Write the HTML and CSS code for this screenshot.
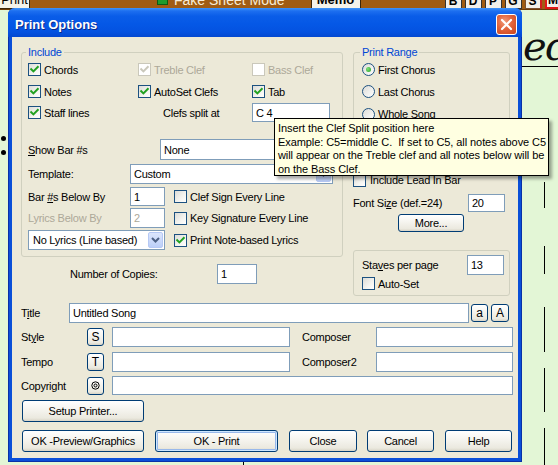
FILE: index.html
```html
<!DOCTYPE html>
<html>
<head>
<meta charset="utf-8">
<title>Print Options</title>
<link rel="stylesheet" href="styles.css">
</head>
<body>
<div class="app">
  <div class="toolbar">
    <span class="tb-btn tb-print">Print</span>
    <span class="tb-fake"><span class="tb-cb"></span>Fake Sheet Mode</span>
    <span class="tb-btn tb-memo">Memo</span>
    <span class="tb-letters">
      <span class="tb-l">B</span><span class="tb-l">D</span><span class="tb-l">P</span><span class="tb-l">G</span><span class="tb-l tb-s">S</span><span class="tb-l tb-m">M</span>
    </span>
  </div>
  <div class="tb-line"></div>
  <span class="sheet-title">ed</span>
  <span class="sheet-rule"></span>
  <span class="dot d1"></span><span class="dot d2"></span>
  <span class="bar b1"></span><span class="bar b2"></span><span class="bar b3"></span><span class="bar b4"></span><span class="bar b5"></span>
  <span class="bar b6"></span>
</div>

<div class="dialog">
  <div class="titlebar">
    <span class="title-text">Print Options</span>
    <span class="close-btn"><svg width="13" height="13" viewBox="0 0 13 13"><path d="M2 2 L11 11 M11 2 L2 11" stroke="#fff" stroke-width="2.2" stroke-linecap="round"/></svg></span>
  </div>
  <div class="dbody">
    <div class="top">
      <div class="col-left">
        <fieldset class="group inc">
          <legend>Include</legend>
          <div class="cbgrid">
            <span class="ck"><span class="cb"><svg viewBox="0 0 11 11"><path d="M2.2 5.2 L4.4 7.4 L8.8 3" class="chk"/></svg></span>Chords</span>
            <span class="ck dis"><span class="cb dis"><svg viewBox="0 0 11 11"><path d="M2.2 5.2 L4.4 7.4 L8.8 3" class="chk"/></svg></span>Treble Clef</span>
            <span class="ck dis"><span class="cb dis"></span>Bass Clef</span>
            <span class="ck"><span class="cb"><svg viewBox="0 0 11 11"><path d="M2.2 5.2 L4.4 7.4 L8.8 3" class="chk"/></svg></span>Notes</span>
            <span class="ck"><span class="cb"><svg viewBox="0 0 11 11"><path d="M2.2 5.2 L4.4 7.4 L8.8 3" class="chk"/></svg></span>AutoSet Clefs</span>
            <span class="ck"><span class="cb"><svg viewBox="0 0 11 11"><path d="M2.2 5.2 L4.4 7.4 L8.8 3" class="chk"/></svg></span>Tab</span>
            <span class="ck"><span class="cb"><svg viewBox="0 0 11 11"><path d="M2.2 5.2 L4.4 7.4 L8.8 3" class="chk"/></svg></span>Staff lines</span>
            <span class="lbl split">Clefs split at</span>
            <span class="inp c4">C 4</span>
          </div>
          <div class="row r-show">
            <span class="lbl w132"><u>S</u>how Bar #s</span>
            <span class="sel w173"><span class="sel-text">None</span><span class="arrow"><svg width="9" height="6" viewBox="0 0 9 6"><path d="M1 1 L4.5 4.5 L8 1" stroke="#4d6185" stroke-width="2" fill="none"/></svg></span></span>
          </div>
          <div class="row r-tpl">
            <span class="lbl w102">Template:</span>
            <span class="sel w203"><span class="sel-text">Custom</span><span class="arrow"><svg width="9" height="6" viewBox="0 0 9 6"><path d="M1 1 L4.5 4.5 L8 1" stroke="#4d6185" stroke-width="2" fill="none"/></svg></span></span>
          </div>
          <div class="row r-bar">
            <span class="lbl w102">Bar <u>#</u>s Below By</span>
            <span class="inp w35">1</span>
            <span class="ck ml9"><span class="cb"></span>Clef Sign Every Line</span>
          </div>
          <div class="row r-lyr">
            <span class="lbl w102 gray">Lyrics Below By</span>
            <span class="inp w35 gray">2</span>
            <span class="ck ml9"><span class="cb"></span>Key Signature Every Line</span>
          </div>
          <div class="row r-nol">
            <span class="sel w137"><span class="sel-text">No Lyrics (Line based)</span><span class="arrow"><svg width="9" height="6" viewBox="0 0 9 6"><path d="M1 1 L4.5 4.5 L8 1" stroke="#4d6185" stroke-width="2" fill="none"/></svg></span></span>
            <span class="ck ml9"><span class="cb"><svg viewBox="0 0 11 11"><path d="M2.2 5.2 L4.4 7.4 L8.8 3" class="chk"/></svg></span>Print Note-based Lyrics</span>
          </div>
        </fieldset>
        <div class="row r-copies">
          <span class="lbl w147">Number of Copies:</span>
          <span class="inp w40">1</span>
        </div>
      </div>
      <div class="col-right">
        <fieldset class="group rng">
          <legend>Print Range</legend>
          <div class="rgrid">
            <span class="ck"><span class="rb on"></span>First Chorus</span>
            <span class="ck"><span class="rb"></span>Last Chorus</span>
            <span class="ck"><span class="rb"></span>Whole Song</span>
          </div>
        </fieldset>
        <div class="row r-lead">
          <span class="ck"><span class="cb mr4"></span>Include Lead In Bar</span>
        </div>
        <div class="row r-font">
          <span class="lbl w115">Font Si<u>z</u>e (def.=24)</span>
          <span class="inp w37">20</span>
        </div>
        <div class="row r-more">
          <span class="btn more">More...</span>
        </div>
        <fieldset class="group staves">
          <div class="row r-stv">
            <span class="lbl w105">Sta<u>v</u>es per page</span>
            <span class="inp w37">13</span>
          </div>
          <div class="row r-auto">
            <span class="ck"><span class="cb"></span>Auto-Set</span>
          </div>
        </fieldset>
      </div>
    </div>

    <div class="form">
      <div class="row f-title">
        <span class="lbl w48">T<u>i</u>tle</span>
        <span class="inp w400">Untitled Song</span>
        <span class="btn sm ml2">a</span>
        <span class="btn sm w18 ml3">A</span>
      </div>
      <div class="row f-row mt4">
        <span class="lbl w66">St<u>y</u>le</span>
        <span class="btn sm">S</span>
        <span class="inp w178 ml8"></span>
        <span class="lbl w74 ml12">Composer</span>
        <span class="inp w137"></span>
      </div>
      <div class="row f-row mt5">
        <span class="lbl w66">Tempo</span>
        <span class="btn sm">T</span>
        <span class="inp w178 ml8"></span>
        <span class="lbl w74 ml12">Composer2</span>
        <span class="inp w137"></span>
      </div>
      <div class="row f-copy">
        <span class="lbl w66">Copyright</span>
        <span class="btn sm"><svg width="9" height="9" viewBox="0 0 9 9"><circle cx="4.5" cy="4.5" r="3.7" fill="none" stroke="#000" stroke-width="1"/><circle cx="4.5" cy="4.5" r="1.5" fill="none" stroke="#000" stroke-width="1"/></svg></span>
        <span class="inp w401 ml8"></span>
      </div>
      <div class="row f-setup">
        <span class="btn w122">Setup Printer...</span>
      </div>
      <div class="row f-bottom">
        <span class="btn w122">OK -Preview/Graphics</span>
        <span class="btn def w123 ml11">OK - Print</span>
        <span class="btn w68 ml11">Close</span>
        <span class="btn w67 ml10">Cancel</span>
        <span class="btn w67 ml11">Help</span>
      </div>
    </div>
  </div>
</div>

<div class="tooltip">
  <div>Insert the Clef Split position here</div>
  <div>Example: C5=middle C.&nbsp; If set to C5, all notes above C5</div>
  <div>will appear on the Treble clef and all notes below will be</div>
  <div>on the Bass Clef.</div>
</div>
</body>
</html>
```

FILE: styles.css
```css
* { box-sizing: border-box; }
html, body { margin: 0; padding: 0; }
body {
  width: 558px;
  height: 465px;
  overflow: hidden;
  position: relative;
  background: #e3f6d6;
  font-family: "Liberation Sans", Arial, sans-serif;
  font-size: 11px;
  color: #000;
}

/* ---------- background application ---------- */
.app { position: relative; width: 558px; height: 465px; }
.toolbar {
  height: 9px;
  background: #a05c12;
  display: flex;
  align-items: flex-end;
  overflow: hidden;
}
.tb-line { height: 1px; background: #6b3a08; }
.tb-btn {
  flex: none;
  height: 18px;
  background: #f4f2ea;
  border: 1px solid #3a2408;
  display: flex;
  align-items: flex-end;
  justify-content: center;
  line-height: 12px;
  padding-bottom: 2px;
  font-size: 13px;
}
.tb-print { width: 31px; margin-left: -1px; }
.tb-fake {
  flex: none;
  margin-left: 127px;
  display: flex;
  align-items: flex-end;
  color: #f6ecd8;
  font-size: 14px;
  line-height: 12px;
  padding-bottom: 3px;
}
.tb-cb {
  width: 11px; height: 11px;
  background: #1d9c2c;
  border: 1px solid #0c5a14;
  margin-right: 6px;
  margin-bottom: 1px;
}
.tb-memo { width: 50px; margin-left: 26px; font-weight: bold; font-size: 13px; }
.tb-letters { display: flex; margin-left: 84px; align-items: flex-end; }
.tb-l {
  width: 17px; height: 16px;
  margin-right: 3px;
  background: #f2f0ea;
  border: 1px solid #333;
  font-weight: bold;
  font-size: 12px;
  line-height: 11px;
  display: flex; align-items: flex-end; justify-content: center;
  padding-bottom: 1px;
}
.tb-s { border-color: #7a5030; border-right: 2px solid #d21c1c; }
.tb-m { border: 2px solid #e01818; margin-right: 0; }

.sheet-title {
  position: absolute;
  left: 523px; top: 24px;
  font-family: "DejaVu Serif", "Liberation Serif", serif;
  font-style: italic;
  font-size: 40px;
  line-height: 44px;
  color: #111;
  letter-spacing: -1px;
}
.sheet-rule { position: absolute; left: 522px; top: 66px; width: 36px; height: 1px; background: #000; }
.dot { position: absolute; left: 1px; width: 5px; height: 5px; border-radius: 50%; background: #000; }
.d1 { top: 136px; }
.d2 { top: 150px; }
.bar { position: absolute; left: 544px; width: 1px; background: #000; }
.b1 { top: 182px; height: 26px; }
.b2 { top: 246px; height: 28px; }
.b3 { top: 307px; height: 45px; }
.b4 { top: 368px; height: 44px; }
.b5 { top: 428px; height: 37px; }
.b6 { left: 243px; top: 461px; height: 4px; }

/* ---------- dialog window ---------- */
.dialog {
  position: absolute;
  left: 8px; top: 8px;
  width: 514px; height: 454px;
  background: #0a4fd8;
  border-radius: 7px 7px 0 0;
  padding: 0 4px 4px;
  display: flex;
  flex-direction: column;
  letter-spacing: -0.25px;
  box-shadow: inset 1px 0 0 #0831a8, inset -1px 0 0 #0831a8, inset 0 -1px 0 #0831a8;
}
.titlebar {
  height: 29px;
  margin: 0 -4px;
  border-radius: 7px 7px 0 0;
  background: linear-gradient(to bottom, #3f94f8 0px, #1d6ff0 3px, #0a5de8 8px, #0558e6 16px, #0452e0 24px, #0348d0 29px);
  display: flex;
  align-items: center;
  justify-content: space-between;
  padding: 0 5px 0 7px;
}
.title-text {
  color: #fff;
  font-weight: bold;
  font-size: 13px;
  letter-spacing: 0;
  text-shadow: 1px 1px 0 #0b2a8a;
  margin-top: 3px;
}
.close-btn {
  width: 21px; height: 21px;
  margin-top: 3px;
  border: 1px solid #fff;
  border-radius: 3px;
  background: radial-gradient(circle at 40% 35%, #f09b7a 0%, #e2643c 45%, #c8431c 100%);
  display: flex; align-items: center; justify-content: center;
}
.dbody {
  flex: 1;
  background: #ece9d8;
  padding: 9px 0 0 9px;
}

/* ---------- generic controls ---------- */
.row { display: flex; align-items: center; }
.lbl { flex: none; white-space: nowrap; }
.gray { color: #aca899 !important; }
.ck { display: flex; align-items: center; white-space: nowrap; }
.ck.dis { color: #aca899; }
.cb {
  flex: none;
  width: 13px; height: 13px;
  border: 1px solid #1c5180;
  background: linear-gradient(135deg, #dcdcd7 0%, #f4f4f0 60%, #fff 100%);
  margin-right: 3px;
  display: flex;
}
.cb svg { width: 11px; height: 11px; }
.chk { fill: none; stroke: #21a121; stroke-width: 2; stroke-linecap: square; }
.cb.dis { border-color: #cac8bb; background: #fff; }
.cb.dis .chk { stroke: #cac8bb; }
.mr4 { margin-right: 4px; }
.rb {
  flex: none;
  width: 13px; height: 13px;
  border-radius: 50%;
  border: 1px solid #1c5180;
  background: linear-gradient(135deg, #dcdcd7 0%, #fff 100%);
  margin-right: 3px;
  display: flex; align-items: center; justify-content: center;
}
.rb.on::after {
  content: "";
  width: 5px; height: 5px;
  border-radius: 50%;
  background: radial-gradient(circle at 35% 35%, #7fe07a, #21a121);
}
.inp {
  flex: none;
  height: 100%;
  background: #fff;
  border: 1px solid #7f9db9;
  padding-left: 3px;
  display: flex; align-items: center;
  white-space: nowrap;
  overflow: hidden;
}
.sel {
  flex: none;
  height: 100%;
  background: #fff;
  border: 1px solid #7f9db9;
  display: flex; align-items: stretch;
  padding: 1px;
}
.sel-text { flex: 1; display: flex; align-items: center; padding-left: 2px; white-space: nowrap; overflow: hidden; }
.arrow {
  width: 15px;
  border: 1px solid #b6c9f5;
  border-radius: 2px;
  background: linear-gradient(to bottom, #dce6fd, #bccff8);
  display: flex; align-items: center; justify-content: center;
}
.btn {
  flex: none;
  height: 22px;
  border: 1px solid #003c74;
  border-radius: 3px;
  background: linear-gradient(to bottom, #ffffff 0%, #f6f5f0 40%, #ebe9df 85%, #d8d4c6 100%);
  display: flex; align-items: center; justify-content: center;
  white-space: nowrap;
}
.btn.def { box-shadow: inset 0 0 0 1px #cee7ff, inset 0 0 0 2px #98b8ea; }
.btn.sm { width: 17px; height: 18px; font-size: 12px; letter-spacing: 0; }

/* widths */
.w18 { width: 18px !important; }
.w35 { width: 35px; }
.w37 { width: 37px; }
.w40 { width: 40px; }
.w48 { width: 48px; }
.w66 { width: 66px; }
.w67 { width: 67px; }
.w68 { width: 68px; }
.w74 { width: 74px; }
.w102 { width: 102px; }
.w105 { width: 105px; }
.w115 { width: 115px; }
.w122 { width: 122px; }
.w123 { width: 123px; }
.w132 { width: 132px; }
.w137 { width: 137px; }
.w147 { width: 147px; }
.w173 { width: 173px; }
.w178 { width: 178px; }
.w203 { width: 203px; }
.w400 { width: 400px; }
.w401 { width: 401px; }
.ml2 { margin-left: 2px; }
.ml3 { margin-left: 3px; }
.ml8 { margin-left: 8px; }
.ml9 { margin-left: 9px; }
.ml10 { margin-left: 10px; }
.ml11 { margin-left: 11px; }
.ml12 { margin-left: 12px; }
.mt4 { margin-top: 4px; }
.mt5 { margin-top: 5px; }

/* ---------- group boxes ---------- */
.group {
  margin: 0;
  min-width: 0;
  border: 1px solid #d0d0bf;
  border-radius: 3px;
}
.group legend {
  padding: 0 2px;
  margin-left: -2px;
  color: #0046d5;
  line-height: 13px;
  font-size: 11px;
}

.top { display: flex; gap: 10px; height: 250px; }
.col-left { width: 322px; flex: none; }
.col-right { width: 157px; flex: none; }

.inc { padding: 0 6px 6px; height: 211px; }
.cbgrid {
  display: grid;
  grid-template-columns: 110px 114px 78px;
  grid-template-rows: 21px 23px 19px;
  align-items: center;
}
.split { padding-left: 25px; }
.c4 { height: 19px; }
.r-show { margin-top: 17px; height: 21px; }
.r-tpl { margin-top: 4px; height: 20px; }
.r-bar { margin-top: 3px; height: 19px; }
.r-lyr { margin-top: 2px; height: 20px; }
.r-nol { margin-top: 2px; height: 20px; }
.r-nol .sel-text { padding-left: 3px; }
.r-copies { margin-top: 7px; height: 20px; padding-left: 49px; }

.rng { padding: 0 6px 4px 8px; height: 84px; }
.rgrid { display: grid; grid-template-rows: 21px 23px 22px; align-items: center; }
.r-lead { margin-top: 40px; height: 20px; }
.r-font { margin-top: 4px; height: 18px; }
.r-more { margin-top: 2px; height: 18px; }
.more { width: 66px; height: 18px; margin-left: 45px; }
.staves { margin-top: 18px; height: 46px; padding: 4px 0 0 8px; }
.r-stv { height: 20px; }
.r-auto { margin-top: 2px; height: 13px; }

/* ---------- lower form ---------- */
.form { margin-top: 7px; }
.f-title { height: 20px; }
.f-row { height: 20px; }
.f-copy { margin-top: 4px; height: 19px; }
.f-setup { margin-top: 5px; height: 22px; padding-left: 1px; }
.f-bottom { margin-top: 8px; height: 22px; padding-left: 1px; }

/* ---------- tooltip ---------- */
.tooltip {
  position: absolute;
  left: 274px; top: 118px;
  width: 275px; height: 58px;
  background: #ffffe1;
  border: 1px solid #000;
  padding: 3px 0 0 3px;
  line-height: 13.7px;
  font-size: 11px;
  letter-spacing: -0.08px;
  white-space: nowrap;
  overflow: hidden;
  box-shadow: 3px 3px 3px rgba(0, 0, 0, 0.35);
}
```
